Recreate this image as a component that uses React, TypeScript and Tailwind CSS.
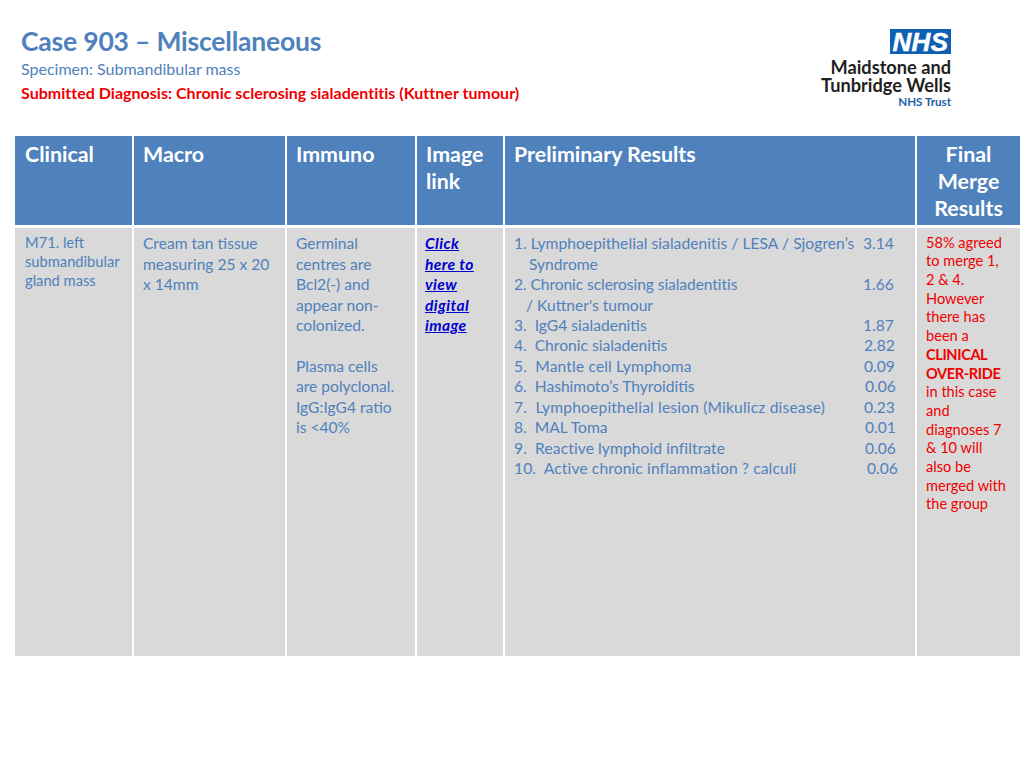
import React from 'react';

const font = { fontFamily: 'Lato, "Open Sans", sans-serif' };

const results: { label: string; indent?: string; score?: string; scoreLeft?: string; track?: string }[] = [
  { label: '1. Lymphoepithelial sialadenitis / LESA / Sjogren’s', score: '3.14', scoreLeft: 'ml-[349px]', track: 'tracking-[0.05px]' },
  { label: 'Syndrome', indent: 'pl-[15px]' },
  { label: '2. Chronic sclerosing sialadentitis', score: '1.66', scoreLeft: 'ml-[349px]', track: 'tracking-[-0.08px]' },
  { label: '/ Kuttner\'s tumour', indent: 'pl-[12px]' },
  { label: '3.  IgG4 sialadenitis', score: '1.87', scoreLeft: 'ml-[349px]' },
  { label: '4.  Chronic sialadenitis', score: '2.82', scoreLeft: 'ml-[350px]' },
  { label: '5.  Mantle cell Lymphoma', score: '0.09', scoreLeft: 'ml-[350px]', track: 'tracking-[0.15px]' },
  { label: '6.  Hashimoto’s Thyroiditis', score: '0.06', scoreLeft: 'ml-[351px]' },
  { label: '7.  Lymphoepithelial lesion (Mikulicz disease)', score: '0.23', scoreLeft: 'ml-[350px]', track: 'tracking-[0.17px]' },
  { label: '8.  MAL Toma', score: '0.01', scoreLeft: 'ml-[351px]' },
  { label: '9.  Reactive lymphoid infiltrate', score: '0.06', scoreLeft: 'ml-[351px]', track: 'tracking-[0.1px]' },
  { label: '10.  Active chronic inflammation ? calculi', score: '0.06', scoreLeft: 'ml-[353px]', track: 'tracking-[0.12px]' },
];

const Header = ({ children, className = '' }: { children: React.ReactNode; className?: string }) => (
  <div className={`bg-[#4f81bd] text-white font-bold text-[21.4px] leading-[27px] pt-[5px] ${className}`}>
    {children}
  </div>
);

const Body = ({ children, className = '' }: { children: React.ReactNode; className?: string }) => (
  <div className={`bg-[#d9d9d9] text-[#4f81bd] text-[15.6px] leading-[20.45px] ${className}`}>
    {children}
  </div>
);

const Logo = () => (
  <div className="flex flex-col items-end mr-[73px] mt-[29px]">
    <div
      className="bg-[#0f5fb4] w-[61px] h-[25px] flex items-center justify-center text-white font-bold italic text-[26px] leading-none tracking-[0.4px] [-webkit-text-stroke:0.5px_white]"
      style={{ fontFamily: '"Liberation Sans", sans-serif' }}
    >
      NHS
    </div>
    <div className="text-[#231f20] font-bold text-[18.2px] leading-[18px] text-right mt-[4px]">
      <div>Maidstone and</div>
      <div>Tunbridge Wells</div>
    </div>
    <div className="text-[#1d5ea8] font-bold text-[11.6px] leading-[13px] mt-[1px]">NHS Trust</div>
  </div>
);

export default function App() {
  return (
    <div className="w-[1024px] h-[768px] bg-white overflow-hidden" style={font}>
      <div className="flex justify-between h-[136px]">
        <div className="pl-[21px] pt-[25px]">
          <h1 className="text-[#4f81bd] font-bold text-[26.5px] leading-[33px] tracking-[-0.2px]">Case 903 – Miscellaneous</h1>
          <p className="text-[#4f81bd] text-[16px] leading-[20px] mt-[1px]">Specimen: Submandibular mass</p>
          <p className="text-[#f00000] font-bold text-[16px] leading-[20px] tracking-[0.02px] mt-[4px]">
            Submitted Diagnosis: Chronic sclerosing sialadentitis (Kuttner tumour)
          </p>
        </div>
        <Logo />
      </div>

      <div className="ml-[15px] grid grid-cols-[117px_151px_128px_86px_410px_103px] grid-rows-[89px_428px] gap-x-[2px] gap-y-[3px] w-[1005px]">
        <Header className="pl-[10px]">Clinical</Header>
        <Header className="pl-[9px]">Macro</Header>
        <Header className="pl-[9px]">Immuno</Header>
        <Header className="pl-[9px]">Image<br />link</Header>
        <Header className="pl-[9px]">Preliminary Results</Header>
        <Header className="text-center">Final<br />Merge<br />Results</Header>

        <Body className="pl-[10px] pt-[4.5px] !text-[14.7px] !leading-[19px]">
          M71. left<br />submandibular<br />gland mass
        </Body>
        <Body className="pl-[9px] pt-[5.3px]">
          Cream tan tissue<br />measuring 25 x 20<br />x 14mm
        </Body>
        <Body className="pl-[9px] pt-[5.3px]">
          Germinal<br />centres are<br />Bcl2(-) and<br />appear non-<br />colonized.<br /><br />
          Plasma cells<br />are polyclonal.<br />IgG:IgG4 ratio<br />is &lt;40%
        </Body>
        <Body className="pl-[8px] pt-[5.3px]">
          <a href="#" className="text-[#0000d0] font-bold italic underline tracking-[0.4px]">
            Click<br />here to<br />view<br />digital<br />image
          </a>
        </Body>
        <Body className="pl-[9px] pt-[5.3px]">
          {results.map((r, i) => (
            <div key={i} className={`relative whitespace-pre h-[20.45px] ${r.indent ?? ''} ${r.track ?? ''}`}>
              {r.label}
              {r.score && <span className={`absolute left-0 top-0 tracking-normal ${r.scoreLeft}`}>{r.score}</span>}
            </div>
          ))}
        </Body>
        <Body className="pl-[9px] pt-[5.6px] !text-[#f00000] !text-[14.6px] !leading-[18.7px]">
          58% agreed<br />to merge 1,<br />2 &amp; 4.<br />However<br />there has<br />been a<br />
          <span className="font-bold tracking-[-0.4px]">CLINICAL<br />OVER-RIDE</span><br />
          in this case<br />and<br />diagnoses 7<br />&amp; 10 will<br />also be<br />merged with<br />the group
        </Body>
      </div>
    </div>
  );
}
